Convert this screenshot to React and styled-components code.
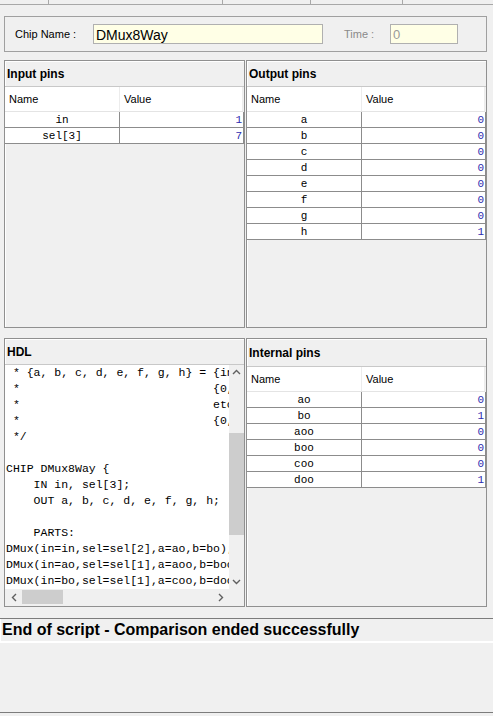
import React from "react";
import styled, { createGlobalStyle } from "styled-components";

const GlobalStyle = createGlobalStyle`
  html, body {
    margin: 0;
    padding: 0;
    background: #f0f0f0;
  }
`;

const Frame = styled.div`
  width: 493px;
  height: 716px;
  background: #f0f0f0;
  display: flex;
  flex-direction: column;
  font-family: "Liberation Sans", Arial, sans-serif;
  overflow: hidden;
`;

const TopStrip = styled.div`
  display: flex;
  height: 4px;
  border-bottom: 1px solid #a8a8a8;
`;

const StripCell = styled.div`
  width: ${(p) => p.w}px;
  border-right: 1px solid #a8a8a8;
  flex-shrink: 0;
`;

const ChipBar = styled.div`
  margin: 11px 6px 0 4px;
  height: 34px;
  border: 1px solid #a0a0a0;
  display: flex;
  align-items: center;
`;

const ChipLabel = styled.span`
  font-size: 11px;
  color: ${(p) => (p.muted ? "#8a8a8a" : "#000")};
  margin-left: ${(p) => p.left}px;
  width: ${(p) => p.w}px;
  flex-shrink: 0;
`;

const ChipField = styled.div`
  width: ${(p) => p.w}px;
  height: 18px;
  border: 1px solid #b0b0b0;
  background: #ffffe6;
  font-size: ${(p) => (p.muted ? 13 : 14)}px;
  color: ${(p) => (p.muted ? "#9a9a9a" : "#000")};
  padding-left: 2px;
  line-height: 20px;
  box-sizing: content-box;
  flex-shrink: 0;
`;

const PanelGrid = styled.div`
  margin: 8px 0 0 4px;
  display: grid;
  grid-template-columns: 241px 241px;
  grid-template-rows: 268px 269px;
  column-gap: 1px;
  row-gap: 10px;
`;

const Panel = styled.div`
  border: 1px solid #909090;
  box-shadow: inset 1px 1px 0 #fff;
  display: flex;
  flex-direction: column;
  min-height: 0;
  overflow: hidden;
`;

const PanelTitle = styled.div`
  height: ${(p) => (p.tall ? 27 : 25)}px;
  padding-left: 2px;
  font-size: 12px;
  font-weight: bold;
  color: #000;
  display: flex;
  align-items: center;
  border-bottom: 1px solid #c8c8c8;
  flex-shrink: 0;
`;

const HeaderRow = styled.div`
  display: grid;
  grid-template-columns: 115px 1fr;
  height: 24px;
  background: #fff;
  border-bottom: 1px solid #e4e4e4;
  margin-right: 1px;
`;

const HeaderCell = styled.div`
  font-size: 11px;
  padding-left: 4px;
  display: flex;
  align-items: center;
  border-right: 1px solid #ececec;
`;

const PinRow = styled.div`
  display: grid;
  grid-template-columns: 115px 1fr;
  height: 15px;
  background: #fff;
  border-bottom: 1px solid #8c8c8c;
  border-right: 1px solid #8c8c8c;
  font-family: "Liberation Mono", "Courier New", monospace;
  font-size: 11px;
  line-height: 16px;
`;

const NameCell = styled.div`
  text-align: center;
  border-right: 1px solid #8c8c8c;
  color: #000;
`;

const ValueCell = styled.div`
  text-align: right;
  padding-right: 1px;
  color: #2b2bb0;
`;

const HdlBody = styled.div`
  flex: 1;
  display: grid;
  grid-template-columns: 1fr 15px;
  grid-template-rows: 1fr 17px;
  min-height: 0;
`;

const CodeView = styled.pre`
  margin: 0;
  background: #fff;
  overflow: hidden;
  font-family: "Liberation Mono", "Courier New", monospace;
  font-size: 11.5px;
  line-height: 16px;
  padding: 0 0 0 1px;
  color: #000;
  white-space: pre;
`;

const VScroll = styled.div`
  background: #f0f0f0;
  display: flex;
  flex-direction: column;
  align-items: center;
  justify-content: space-between;
  position: relative;
`;

const ScrollThumbV = styled.div`
  position: absolute;
  left: 0;
  right: 0;
  top: 68px;
  height: 102px;
  background: #cdcdcd;
`;

const HScroll = styled.div`
  background: #f0f0f0;
  display: flex;
  align-items: center;
  justify-content: space-between;
  padding: 0 4px 0 5px;
  position: relative;
`;

const ScrollThumbH = styled.div`
  position: absolute;
  top: 1px;
  bottom: 2px;
  left: 17px;
  width: 41px;
  background: #cdcdcd;
`;

const Corner = styled.div`
  background: #f0f0f0;
`;

const Arrow = styled.svg`
  width: 9px;
  height: 9px;
  margin: ${(p) => p.m || "0"};
  position: relative;
  z-index: 1;
`;

const Status = styled.div`
  margin-top: 11px;
  border-top: 1px solid #7c7c7c;
  border-bottom: 1px solid #7c7c7c;
  flex: 1;
  display: flex;
  flex-direction: column;
  margin-bottom: 3px;
`;

const StatusText = styled.div`
  height: 22px;
  border-left: 1px solid #fff;
  border-bottom: 2px solid #fff;
  font-size: 16px;
  font-weight: bold;
  color: #000;
  padding-left: 1px;
  line-height: 22px;
`;

const inputPins = [
  ["in", 1],
  ["sel[3]", 7],
];
const outputPins = [
  ["a", 0], ["b", 0], ["c", 0], ["d", 0],
  ["e", 0], ["f", 0], ["g", 0], ["h", 1],
];
const internalPins = [
  ["ao", 0], ["bo", 1], ["aoo", 0], ["boo", 0], ["coo", 0], ["doo", 1],
];

const hdl = [
  " * {a, b, c, d, e, f, g, h} = {in, 0, 0, 0, 0, 0, 0, 0} if sel == 000",
  " *                            {0, in, 0, 0, 0, 0, 0, 0} if sel == 001",
  " *                            etc.",
  " *                            {0, 0, 0, 0, 0, 0, 0, in} if sel == 111",
  " */",
  "",
  "CHIP DMux8Way {",
  "    IN in, sel[3];",
  "    OUT a, b, c, d, e, f, g, h;",
  "",
  "    PARTS:",
  "DMux(in=in,sel=sel[2],a=ao,b=bo);",
  "DMux(in=ao,sel=sel[1],a=aoo,b=boo);",
  "DMux(in=bo,sel=sel[1],a=coo,b=doo);",
].join("\n");

const PinTable = ({ title, pins, tall }) => (
  <Panel>
    <PanelTitle tall={tall}>{title}</PanelTitle>
    <HeaderRow>
      <HeaderCell>Name</HeaderCell>
      <HeaderCell>Value</HeaderCell>
    </HeaderRow>
    {pins.map(([name, value]) => (
      <PinRow key={name}>
        <NameCell>{name}</NameCell>
        <ValueCell>{value}</ValueCell>
      </PinRow>
    ))}
  </Panel>
);

const Chevron = ({ dir, m }) => {
  const paths = {
    up: "M1 6 L4.5 2.5 L8 6",
    down: "M1 3 L4.5 6.5 L8 3",
    left: "M6 1 L2.5 4.5 L6 8",
    right: "M3 1 L6.5 4.5 L3 8",
  };
  return (
    <Arrow viewBox="0 0 9 9" m={m}>
      <path d={paths[dir]} fill="none" stroke="#606060" strokeWidth="1.4" />
    </Arrow>
  );
};

const App = () => {
  return (
    <Frame>
      <GlobalStyle />
      <TopStrip>
        <StripCell w={48} />
        <StripCell w={173} />
        <StripCell w={87} />
        <StripCell w={91} />
      </TopStrip>
      <ChipBar>
        <ChipLabel left={10} w={78}>Chip Name :</ChipLabel>
        <ChipField w={226}>DMux8Way</ChipField>
        <ChipLabel muted left={21} w={46}>Time :</ChipLabel>
        <ChipField muted w={64}>0</ChipField>
      </ChipBar>
      <PanelGrid>
        <PinTable title="Input pins" pins={inputPins} />
        <PinTable title="Output pins" pins={outputPins} />
        <Panel>
          <PanelTitle>HDL</PanelTitle>
          <HdlBody>
            <CodeView>{hdl}</CodeView>
            <VScroll>
              <Chevron dir="up" m="3px 0 0" />
              <ScrollThumbV />
              <Chevron dir="down" m="0 0 3px" />
            </VScroll>
            <HScroll>
              <Chevron dir="left" />
              <ScrollThumbH />
              <Chevron dir="right" />
            </HScroll>
            <Corner />
          </HdlBody>
        </Panel>
        <PinTable title="Internal pins" pins={internalPins} tall />
      </PanelGrid>
      <Status>
        <StatusText>End of script - Comparison ended successfully</StatusText>
      </Status>
    </Frame>
  );
};

export default App;
